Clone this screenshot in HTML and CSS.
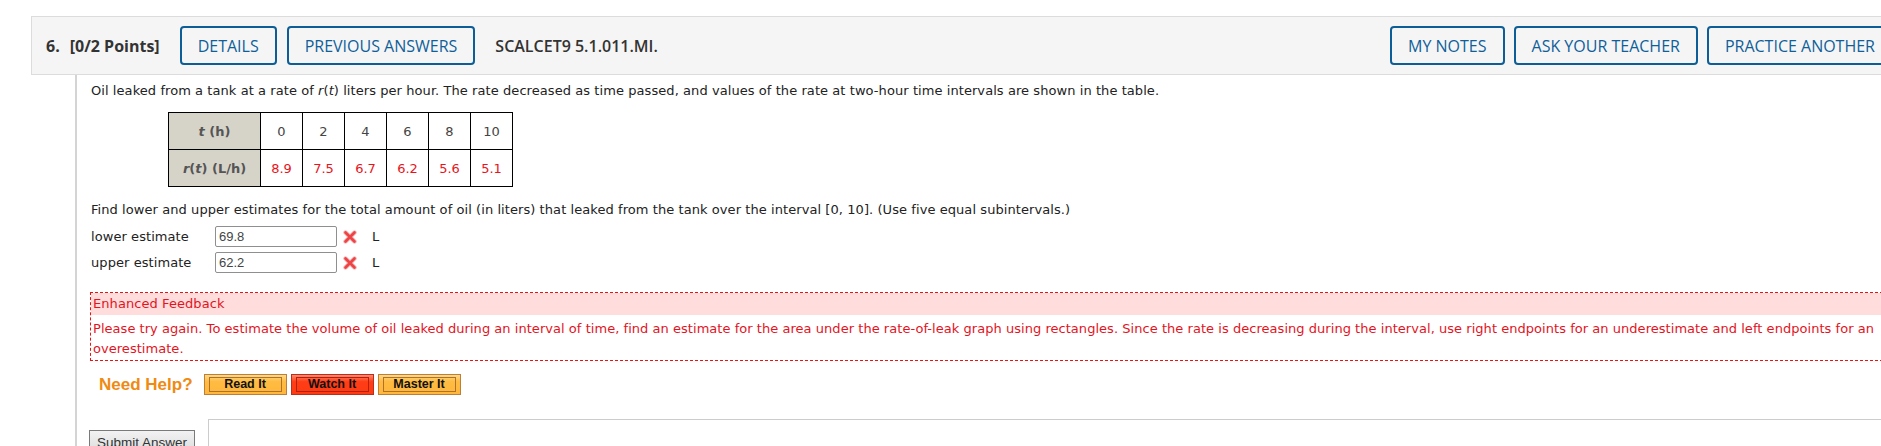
FILE: index.html
```html
<!DOCTYPE html>
<html lang="en">
<head>
    <meta charset="UTF-8">
    <title>Question 6</title>
    <link rel="stylesheet" href="styles.css">
</head>
<body>
    <div class="question">
        <div class="q-header">
            <span class="q-num">6.</span>
            <span class="q-points">[0/2 Points]</span>
            <button class="hdr-btn details">DETAILS</button>
            <button class="hdr-btn">PREVIOUS ANSWERS</button>
            <span class="q-code">SCALCET9 5.1.011.MI.</span>
            <div class="hdr-right">
                <button class="hdr-btn">MY NOTES</button>
                <button class="hdr-btn">ASK YOUR TEACHER</button>
                <button class="hdr-btn">PRACTICE ANOTHER</button>
            </div>
        </div>

        <div class="q-body">
            <p class="intro">Oil leaked from a tank at a rate of <i>r</i>(<i>t</i>) liters per hour. The rate decreased as time passed, and values of the rate at two-hour time intervals are shown in the table.</p>

            <table class="rates">
                <tr>
                    <th><i>t</i> (h)</th>
                    <td>0</td><td>2</td><td>4</td><td>6</td><td>8</td><td>10</td>
                </tr>
                <tr class="vals">
                    <th><i>r</i>(<i>t</i>) (L/h)</th>
                    <td>8.9</td><td>7.5</td><td>6.7</td><td>6.2</td><td>5.6</td><td>5.1</td>
                </tr>
            </table>

            <p class="task">Find lower and upper estimates for the total amount of oil (in liters) that leaked from the tank over the interval [0, 10]. (Use five equal subintervals.)</p>

            <div class="answers">
                <div class="ans-row">
                    <label>lower estimate</label>
                    <input type="text" value="69.8">
                    <svg class="wrong" width="14" height="14" viewBox="0 0 14 14">
                        <path d="M2.5 2.5 L11.5 11.5 M11.5 2.5 L2.5 11.5" stroke="#f8b4b4" stroke-width="4.4" stroke-linecap="round"/>
                        <path d="M2.5 2.5 L11.5 11.5 M11.5 2.5 L2.5 11.5" stroke="#ec4447" stroke-width="2.6" stroke-linecap="round"/>
                    </svg>
                    <span class="unit">L</span>
                </div>
                <div class="ans-row">
                    <label>upper estimate</label>
                    <input type="text" value="62.2">
                    <svg class="wrong" width="14" height="14" viewBox="0 0 14 14">
                        <path d="M2.5 2.5 L11.5 11.5 M11.5 2.5 L2.5 11.5" stroke="#f8b4b4" stroke-width="4.4" stroke-linecap="round"/>
                        <path d="M2.5 2.5 L11.5 11.5 M11.5 2.5 L2.5 11.5" stroke="#ec4447" stroke-width="2.6" stroke-linecap="round"/>
                    </svg>
                    <span class="unit">L</span>
                </div>
            </div>

            <div class="feedback">
                <div class="fb-title">Enhanced Feedback</div>
                <div class="fb-text">Please try again. To estimate the volume of oil leaked during an interval of time, find an estimate for the area under the rate-of-leak graph using rectangles. Since the rate is decreasing during the interval, use right endpoints for an underestimate and left endpoints for an overestimate.</div>
            </div>

            <div class="help">
                <span class="need-help">Need Help?</span>
                <button class="help-btn"><span>Read It</span></button>
                <button class="help-btn watch"><span>Watch It</span></button>
                <button class="help-btn"><span>Master It</span></button>
            </div>

            <div class="submit-row">
                <button class="submit">Submit Answer</button>
                <div class="work-box"></div>
            </div>
        </div>
    </div>
</body>
</html>
```

FILE: styles.css
```css
html, body {
    overflow: hidden;
}
body {
    margin: 0;
    font-family: "DejaVu Sans", Verdana, sans-serif;
    font-size: 13px;
    letter-spacing: 0.07px;
    color: #222;
    background: #fff;
}

.question {
    width: 1877px;
    margin: 16px 0 0 31px;
}

/* header bar */
.q-header {
    display: flex;
    align-items: center;
    box-sizing: border-box;
    height: 59px;
    padding: 0 14px;
    background: #f5f5f5;
    border: 1px solid #dcdcdc;
    font-family: "Open Sans", "Liberation Sans", sans-serif;
    font-size: 16px;
    letter-spacing: 0;
    color: #333;
}
.q-num {
    font-weight: 700;
    margin-right: 10px;
}
.q-points {
    font-weight: 700;
    margin-right: 20px;
}
.q-code {
    font-weight: 600;
    margin-left: 20px;
}
.hdr-btn {
    height: 39px;
    padding: 0 16px;
    border: 2px solid #0d5e97;
    border-radius: 4px;
    background: transparent;
    color: #0f5f9a;
    font-family: "Open Sans", "Liberation Sans", sans-serif;
    font-size: 16px;
    font-weight: 500;
    cursor: pointer;
}
.details {
    margin-right: 10px;
}
.hdr-right {
    display: flex;
    gap: 9px;
    margin-left: auto;
}

/* question body */
.q-body {
    margin-left: 44px;
    border-left: 2px solid #d4d4d4;
    padding: 8px 0 30px 14px;
}
.intro, .task {
    margin: 0;
    line-height: 16px;
}
.task {
    margin-top: 15px;
}

.rates {
    border-collapse: collapse;
    margin: 13px 0 0 77px;
    font-size: 13px;
    letter-spacing: 0;
}
.rates th, .rates td {
    border: 1px solid #000;
    height: 36px;
    padding: 0;
    text-align: center;
}
.rates th {
    width: 91px;
    background: #d6d3c9;
    color: #555;
    font-weight: bold;
}
.rates td {
    width: 41px;
    color: #444;
}
.rates .vals td {
    color: #e8141c;
}

.answers {
    margin-top: 8px;
    display: flex;
    flex-direction: column;
    gap: 5px;
}
.ans-row {
    display: flex;
    align-items: center;
    height: 21px;
}
.ans-row label {
    width: 124px;
}
.ans-row input {
    box-sizing: border-box;
    width: 122px;
    height: 21px;
    padding: 0 3px;
    border: 1px solid #8f8f8f;
    border-radius: 2px;
    font-family: "Liberation Sans", Arial, sans-serif;
    font-size: 13px;
    color: #444;
}
.wrong {
    margin-left: 6px;
}
.unit {
    margin-left: 15px;
}

/* feedback */
.feedback {
    margin: 19px 0 0 -1px;
    border: 1px dashed #f01010;
    color: #e3141e;
}
.fb-title {
    height: 22px;
    line-height: 22px;
    padding-left: 2px;
    background: #ffdddd;
}
.fb-text {
    padding: 4px 2px 1px;
    line-height: 20px;
    letter-spacing: 0.04px;
}

/* help buttons */
.help {
    display: flex;
    align-items: center;
    gap: 4px;
    height: 21px;
    margin-top: 13px;
    padding-left: 8px;
}
.need-help {
    font-family: "Liberation Sans", Arial, sans-serif;
    font-weight: bold;
    font-size: 17px;
    letter-spacing: 0;
    color: #ef8a12;
    margin-right: 7px;
}
.help-btn {
    box-sizing: border-box;
    width: 83px;
    height: 21px;
    padding: 0;
    border: 1px solid #c07d36;
    background: linear-gradient(#ffd98a, #ffbb42 35%, #ffb73c);
    cursor: pointer;
}
.help-btn span {
    display: block;
    margin: 2px 4px;
    height: 13px;
    line-height: 13px;
    border: 1px solid #b0722a;
    font-family: "Liberation Sans", Arial, sans-serif;
    font-weight: bold;
    font-size: 12.5px;
    letter-spacing: 0;
    color: #111;
}
.help-btn.watch {
    border-color: #b8301c;
    background: linear-gradient(#ff8a70, #ff3d16 35%, #ff3a12);
}
.help-btn.watch span {
    border-color: #b0200c;
}

/* submit */
.submit-row {
    display: flex;
    align-items: flex-start;
    margin-top: 24px;
}
.submit {
    margin: 11px 0 0 -2px;
    height: 24px;
    padding: 0 7px;
    border: 1px solid #7a7a7a;
    background: linear-gradient(#f2f2f2, #dcdcdc);
    font-family: "Liberation Sans", Arial, sans-serif;
    font-size: 13.5px;
    letter-spacing: 0;
    color: #333;
}
.work-box {
    flex: 1;
    height: 80px;
    margin-left: 13px;
    border: 1px solid #cccccc;
}
```
